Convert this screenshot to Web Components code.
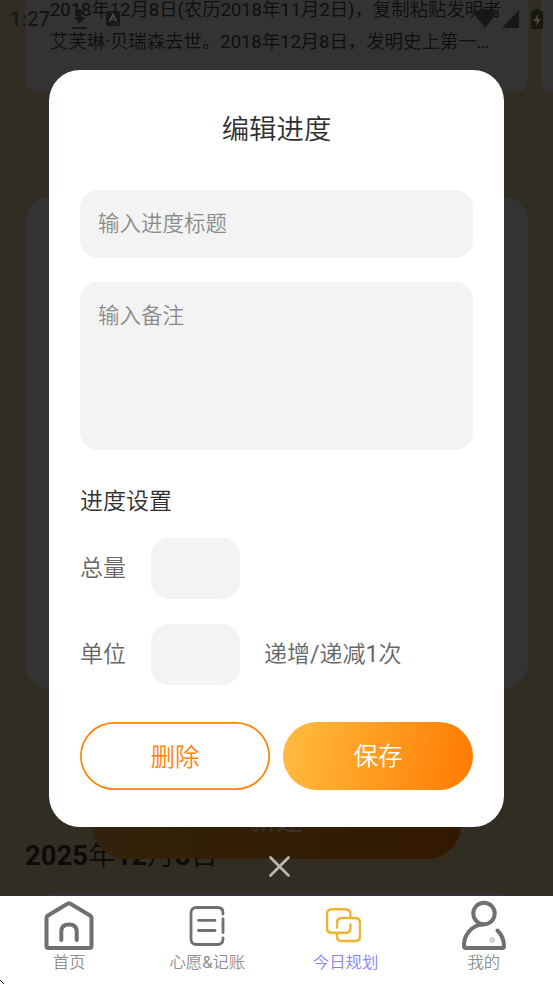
<!DOCTYPE html>
<html lang="zh-CN">
<head>
<meta charset="utf-8">
<title>编辑进度</title>
<style>
html,body{margin:0;height:100%;overflow:hidden;background:#312d23}
body{font-family:Roboto,"Noto Sans CJK SC DemiLight","Noto Sans CJK SC",sans-serif}
</style>
</head>
<body>
<plan-app></plan-app>
<script>
const define = (name, html) => customElements.define(name, class extends HTMLElement {
  constructor() {
    super();
    const t = document.createElement('template');
    t.innerHTML = html;
    this.attachShadow({mode: 'open'}).append(t.content.cloneNode(true));
  }
});

define('status-bar', `<style>
:host{position:absolute;inset:0 0 auto 0;height:38px;box-sizing:border-box;padding:0 10px 0 10px;display:flex;align-items:center;color:#171717;font-size:20.5px;line-height:40px}
.time{width:62px;font-weight:500}svg{display:block}.gap{flex:1}
.cell{margin-left:5px}.bat{margin-left:12px}
</style>
<span class="time">1:27</span>
<svg width="16" height="22" viewBox="0 0 16 22" fill="#171717"><path d="M5.500 1h4v8h4L7.500 15.500 2 9h3.500zM0 19h15v2H0z"/></svg>
<svg style="margin-left:18px" width="15" height="16" viewBox="0 0 15 16"><rect width="14" height="15" rx="1.500" fill="#171717"/><path d="M3.500 10.500 7 3.500l3.500 7M5 8.500h4" fill="none" stroke="#484848" stroke-width="1.700"/><path d="M7 13h1.300M9.300 13h1.300M11.600 13H13" stroke="#444"/></svg>
<span class="gap"></span>
<svg width="24" height="20" viewBox="0 0 24 20"><path d="M0 4Q12-4 24 4L12 19z" fill="#171717"/></svg>
<svg class="cell" width="17" height="18" viewBox="0 0 17 18"><path d="M17 0v18H0z" fill="#171717"/></svg>
<svg class="bat" width="12" height="20" viewBox="0 0 12 20"><path d="M3.500 0h5v2H11q1 0 1 1v16q0 1-1 1H1q-1 0-1-1V3q0-1 1-1h2.500z" fill="#171712"/><path d="M7 5 2.500 12H5.500V17L10 10H7z" fill="#4b4635"/></svg>`);

define('story-strip', `<style>
:host{display:flex;gap:13px;padding-left:25px;height:92px;flex:none}
.card{flex:0 0 503px;box-sizing:border-box;background:#333;border-radius:0 0 12px 12px;padding-left:25px;color:#0e0e0e;font-size:18.4px;line-height:32px;white-space:nowrap}
.line{margin-top:-6px}.line+.line{margin-top:0}
</style><div class="card"><div class="line">2018年12月8日(农历2018年11月2日)，复制粘贴发明者</div><div class="line">艾芙琳·贝瑞森去世。2018年12月8日，发明史上第一…</div></div><div class="card"></div>`);

define('page-backdrop', `<style>
:host{display:flex;flex-direction:column;height:896px;overflow:hidden;isolation:isolate}
.panel{margin:105px 25px 0;height:491px;background:#333;border-radius:24px;flex:none}
.new{position:relative;z-index:1;margin:103px 92px 0;height:68px;flex:none;border-radius:34px;background:linear-gradient(100deg,#33230c,#331800);color:#343638;font-size:27px;line-height:61px;text-align:center}
.date{margin:-21px 0 0 25px;color:#0b0b0a;font-size:27.500px;line-height:36px;flex:none}
.list{margin:19px 38px 0;height:40px;background:#333336;border-radius:18px;flex:none}
</style><story-strip></story-strip><div class="panel"></div><div class="new">新建</div>
<div class="date"><b>2025</b>年<b>12</b>月<b>8</b>日</div><div class="list"></div>`);

define('text-field', `<style>
:host{display:block;box-sizing:border-box;background:#f3f3f3;border-radius:18px;color:#8b8b8b;font-size:21.500px;line-height:32px;padding:18px 18px 0}
</style><slot></slot>`);

define('pill-button', `<style>
:host{display:block;box-sizing:border-box;flex:1 1 0;min-width:0;height:68px;border-radius:34px;color:#ff8204;box-shadow:inset 0 0 0 1.700px #ff8204;font-size:24.500px;line-height:72px;text-align:center}
:host([primary]){box-shadow:none;color:#fff;line-height:70px;background:linear-gradient(100deg,#ffbd40,#ff7a00)}
</style><slot></slot>`);

define('setting-row', `<style>
:host{display:flex;align-items:center;height:61px;font-size:23px;line-height:34px;color:#666}
.label{width:71px}text-field{width:89px;height:61px;margin-right:24px}
</style><span class="label"><slot name="label"></slot></span><text-field></text-field><span class="note"><slot></slot></span>`);

define('edit-dialog', `<style>
:host{position:absolute;left:49px;top:70px;width:455px;height:757px;box-sizing:border-box;padding:0 31px;background:#fff;border-radius:31px;display:flex;flex-direction:column}
h1{margin:40px 0;font-size:27.400px;font-weight:400;line-height:40px;text-align:center;color:#303033}
.title{height:68px}.memo{height:168px;margin-top:24px}
h2{margin:35px 0 19px;font-size:23px;font-weight:400;line-height:34px;color:#303033}
setting-row+setting-row{margin-top:25px}
.actions{display:flex;gap:13px;margin-top:37px}
</style>
<h1>编辑进度</h1><text-field class="title">输入进度标题</text-field><text-field class="memo">输入备注</text-field>
<h2>进度设置</h2>
<setting-row><span slot="label">总量</span></setting-row>
<setting-row><span slot="label">单位</span>递增/递减1次</setting-row>
<div class="actions"><pill-button>删除</pill-button><pill-button primary>保存</pill-button></div>`);

define('close-button', `<style>
:host{position:absolute;left:268px;top:855px;width:24px;height:24px}svg{display:block}
</style><svg width="24" height="24"><path d="M2.500 2.500 20.500 20.500M20.500 2.500 2.500 20.500" fill="none" stroke="#b9b8b4" stroke-width="2.700" stroke-linecap="round"/></svg>`);

define('nav-item', `<style>
:host{flex:1 1 0;display:flex;flex-direction:column;align-items:center;color:#8e8e8e;font-size:16.400px;line-height:24px}
:host([active]){color:#8583f7}
.icon{height:55px}
</style><div class="icon"><slot name="icon"></slot></div><span><slot></slot></span>`);

define('bottom-nav', `<style>
:host{display:flex;height:88px;background:#fff}svg{display:block;fill:none;stroke:#707070;stroke-linecap:round;stroke-linejoin:round}
</style>
<nav-item><svg slot="icon" width="54" height="54" viewBox="0 0 54 54" stroke-width="4"><path d="M4.500 22Q4.500 20.500 6 19.500L25.500 7.800Q27 6.800 28.500 7.800L48 19.500Q49.500 20.500 49.500 22V50Q49.500 52 47.500 52H6.500Q4.500 52 4.500 50Z"/><path d="M19.300 44V35.500Q19.300 28.500 27 28.500Q34.700 28.500 34.700 35.500V44"/></svg>首页</nav-item>
<nav-item><svg slot="icon" width="36" height="54" viewBox="0 0 36 54" stroke-width="2.800"><path d="M34 18V17Q34 11.500 28.500 11.500H7.500Q2 11.500 2 17V43Q2 48.500 7.500 48.500H28.500Q34 48.500 34 43V42M34 23V36.500M9.500 24.300H26M9.500 34.500H26"/></svg>心愿&amp;记账</nav-item>
<nav-item active><svg slot="icon" style="stroke:#f0b331;margin-right:5px" width="36" height="54" viewBox="0 0 36 54" stroke-width="2.400"><path d="M25.400 21.500V18Q25.400 13.200 20.600 13.200H6.800Q2 13.200 2 18V32Q2 36.800 6.800 36.800H20.600Q25.400 36.800 25.400 32V28.500M12 31.500V27Q12 22 16.800 22H30.200Q35 22 35 26.800V40.200Q35 45 30.200 45H16.800Q12 45 12 40.200V37"/></svg>今日规划</nav-item>
<nav-item><svg slot="icon" width="46" height="54" viewBox="0 0 46 54" stroke-width="4"><circle cx="23" cy="17.500" r="10.700"/><path d="M22 28.500C10 29 2.500 40 3 50Q3 52 5 52H41.500Q43 52 43 50Q43 41 36.500 34.500"/><circle cx="31.300" cy="44" r="2.900" fill="#d2d2d2" stroke="none"/></svg>我的</nav-item>`);

define('plan-app', `<style>
:host{display:block;position:relative;width:553px;height:984px;overflow:hidden;background:#312d23}
.corner{position:absolute;left:0;top:979px}
</style><page-backdrop></page-backdrop><bottom-nav></bottom-nav><status-bar></status-bar><edit-dialog></edit-dialog><close-button></close-button>
<svg class="corner" width="5" height="5"><path d="M0 1h1v1H0zM1 2h1v1H1zM2 3h1v1H2zM3 4h1v1H3z" fill="#111"/></svg>`);
</script>
</body>
</html>
